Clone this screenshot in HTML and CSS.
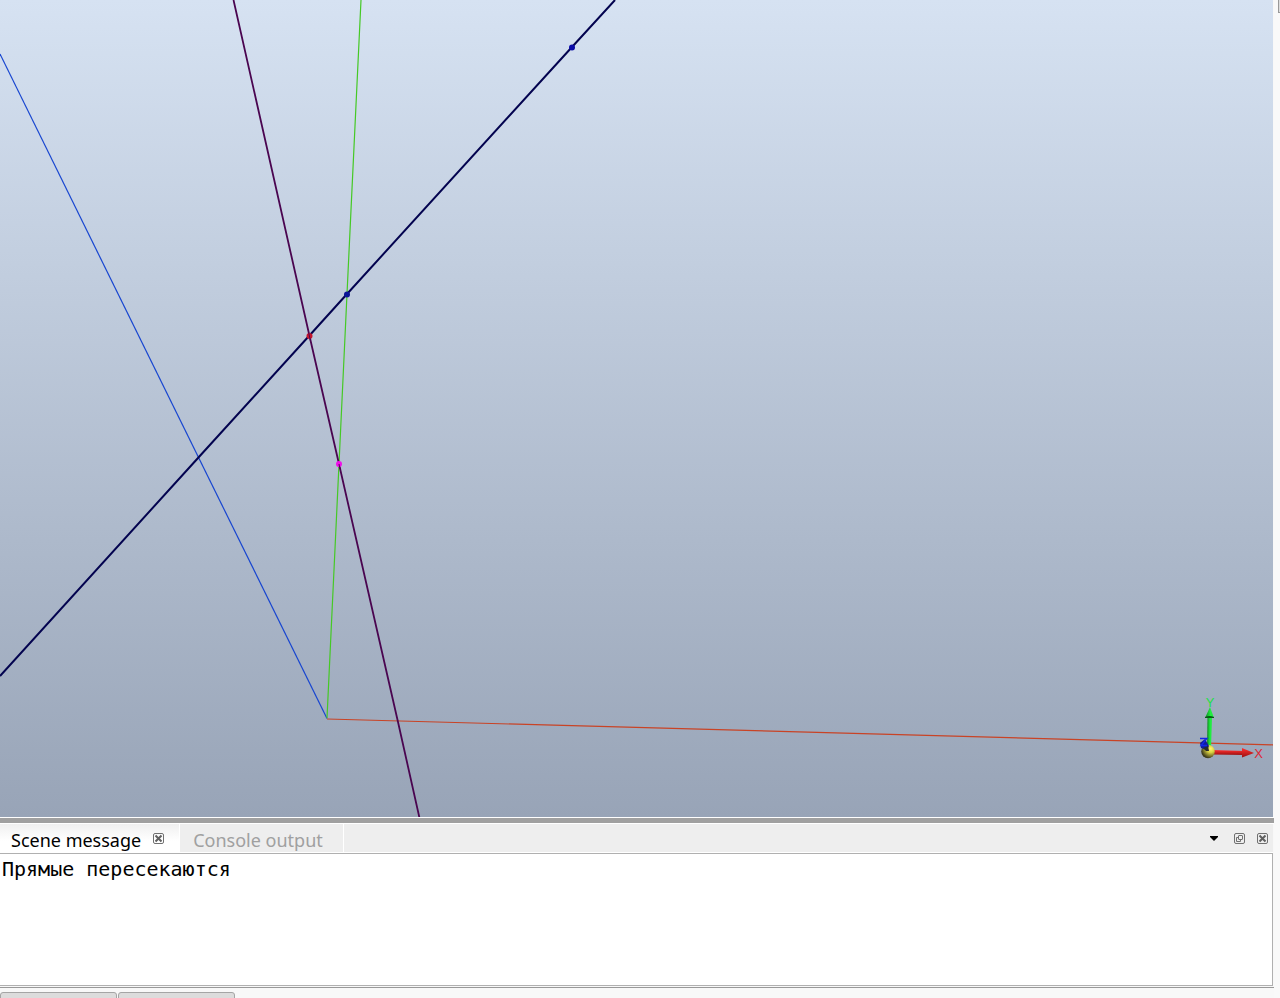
FILE: index.html
```
<!DOCTYPE html>
<html lang="ru">
<head>
<meta charset="utf-8">
<title>Scene message</title>
<link rel="stylesheet" href="styles.css">
</head>
<body>
<div class="window">
  <main class="workspace">
    <section class="viewport" aria-label="3D scene">
      <svg class="scene" aria-hidden="true" fill="none">
        <path d="M0 54L327 718.500" stroke="#1745d0" stroke-width="1.200"/>
        <path d="M361 0L347 294L339 464L327 718" stroke="#45c925" stroke-width="1.200"/>
        <path d="M327 719L1280 745" stroke="#c94325" stroke-width="1.200"/>
        <path d="M0 676L198 458L309 336L347 294L572 47L615 0" stroke="#03034f" stroke-width="2"/>
        <path d="M233.500 0L309.500 336L339 464L398 722L419.500 818" stroke="#4a0550" stroke-width="1.800"/>
        <circle cx="572" cy="47.500" r="3" fill="#0a0aa8"/>
        <circle cx="347" cy="294.500" r="3" fill="#0a1596"/>
        <circle cx="309.500" cy="336" r="3" fill="#c5142c"/>
        <path d="M308.500 332L310.500 341" stroke="#4a0550"/>
        <circle cx="339" cy="464" r="3" fill="#f010e8"/>
        <path d="M339 464L340 469" stroke="#4a0550"/>
      </svg>
      <svg class="triad" viewBox="1180 690 93 75" width="93" height="75" role="img" aria-label="X Y Z">
        <defs>
          <linearGradient id="red" x1="0" y1="0" x2="0" y2="1"><stop offset="0" stop-color="#ff3030"/><stop offset="1" stop-color="#9c1010"/></linearGradient>
          <linearGradient id="green"><stop offset="0" stop-color="#118020"/><stop offset=".6" stop-color="#20ed40"/></linearGradient>
          <radialGradient id="ball" cx=".7" cy=".3" r=".7"><stop offset="0" stop-color="#fff870"/><stop offset=".4" stop-color="#d8d040"/><stop offset="1" stop-color="#3d3b1c"/></radialGradient>
        </defs>
        <path d="M1207.500 716H1212L1211 749H1207Z" fill="url(#green)"/>
        <path d="M1210 707L1214 718H1205Z" fill="url(#green)"/>
        <path d="M1205 717Q1209.500 715 1214 717V718H1205Z" fill="#075b15"/>
        <path d="M1212 750L1244 751V755L1212 754.500Z" fill="url(#red)"/>
        <path d="M1242 748L1254 753L1242 757.500Z" fill="url(#red)"/>
        <circle cx="1208" cy="751.500" r="6.800" fill="url(#ball)"/>
        <path d="M1200 743L1205 739L1209 746L1207 750L1201 748Z" fill="#101d9c"/>
        <path d="M1203 748L1208 746L1209 751L1206 751Z" fill="#292b2d"/>
        <path d="M1200 738.500H1207L1201 745.500H1207" fill="none" stroke="#1425e6" stroke-width="1.300"/>
        <text class="axis" x="1210" y="707" fill="#22e044">Y</text>
        <text class="axis" x="1258.500" y="758" fill="#df2634">X</text>
      </svg>
    </section>
    <div class="splitter"></div>
    <section class="dock">
      <header class="dock-bar">
        <div class="tab tab-active">
          <button class="tab-name" type="button">Scene message</button>
          <button class="icon-button" type="button" aria-label="Close tab">
            <svg width="11" height="11" viewBox="0 0 11 11" fill="none"><rect x=".5" y=".5" width="10" height="10" rx="1.500" stroke="#707070"/><path d="M2.500 2.500L8.500 8.500M8.500 2.500L2.500 8.500" stroke="#606060" stroke-width="2"/></svg>
          </button>
        </div>
        <div class="tab"><button class="tab-name" type="button">Console output</button></div>
        <div class="dock-tools">
          <button class="icon-button" type="button" aria-label="Tab list">
            <svg width="8" height="5" viewBox="0 0 8 5"><path d="M0 0H8V1L4 5L0 1Z" fill="#000"/></svg>
          </button>
          <button class="icon-button" type="button" aria-label="Float panel">
            <svg width="11" height="11" viewBox="0 0 11 11" fill="none" stroke="#707070"><rect x=".5" y=".5" width="10" height="10" rx="1.500"/><rect x="4.500" y="2.500" width="4" height="4" rx=".5"/><path d="M4 4.500H2.500V8.500H6.500V7"/></svg>
          </button>
          <button class="icon-button" type="button" aria-label="Close panel">
            <svg width="11" height="11" viewBox="0 0 11 11" fill="none"><rect x=".5" y=".5" width="10" height="10" rx="1.500" stroke="#707070"/><path d="M2.500 2.500L8.500 8.500M8.500 2.500L2.500 8.500" stroke="#606060" stroke-width="2"/></svg>
          </button>
        </div>
      </header>
      <textarea class="message" aria-label="Scene message" spellcheck="false" readonly>Прямые пересекаются</textarea>
    </section>
    <footer class="bottom-tabs">
      <button class="bottom-tab" type="button" aria-label="First panel"></button>
      <button class="bottom-tab" type="button" aria-label="Second panel"></button>
    </footer>
  </main>
  <aside class="side"><div class="side-panel"></div></aside>
</div>
</body>
</html>
```
FILE: styles.css
```
* {
  box-sizing: border-box;
}

body {
  margin: 0;
  background: #f8f8f8;
  font-family: "Noto Sans", sans-serif;
}

button {
  margin: 0;
  padding: 0;
  border: 0;
  background: none;
  font: inherit;
  color: inherit;
}

.window {
  display: flex;
  height: 100vh;
  overflow: hidden;
}

.workspace {
  display: flex;
  flex: 1;
  flex-direction: column;
  min-width: 0;
}

.viewport {
  position: relative;
  flex: 1;
  min-height: 0;
  margin-right: 1px;
  overflow: hidden;
  background: linear-gradient(#d6e2f2, #98a4b7);
}

.scene {
  display: block;
  width: 100%;
  height: 100%;
}

.triad {
  position: absolute;
  right: 0;
  bottom: 52px;
}

.axis {
  font-family: "Liberation Sans", sans-serif;
  font-size: 13px;
  text-anchor: middle;
}

.splitter {
  height: 7px;
  border: solid #fff;
  border-width: 1px 0;
  background: #a0a0a0;
}

.dock {
  margin-right: 1px;
}

.dock-bar {
  display: flex;
  height: 29px;
  border-bottom: 1px solid #fff;
  background: #eee;
}

.tab {
  display: flex;
  align-items: center;
  gap: 12px;
  padding: 0 20px 0 13px;
  border-right: 1px solid #fff;
  color: #a0a0a0;
  font-size: 18px;
  line-height: 28px;
}

.tab-active {
  padding: 0 15px 0 11px;
  background: linear-gradient(#f0f0f0, #fff 60%);
  color: #000;
}

.tab-name {
  padding-top: 4px;
  white-space: nowrap;
}

.icon-button {
  display: flex;
}

.dock-tools {
  display: flex;
  align-items: center;
  gap: 12px;
  margin-left: auto;
  padding-right: 5px;
}

.dock-tools .icon-button:first-child {
  margin-right: 4px;
}

.message {
  display: block;
  width: 100%;
  height: 133px;
  padding: 3px 2px;
  border: 1px solid #b0b0b0;
  border-left: 0;
  outline: 0;
  resize: none;
  background: #fff;
  color: #000;
  font: 20px/24px "DejaVu Sans Mono", monospace;
}

.bottom-tabs {
  display: flex;
  gap: 1px;
  height: 11px;
  margin-top: 1px;
  padding-top: 4px;
  border-top: 1px solid #999;
  overflow: hidden;
}

.bottom-tab {
  width: 117px;
  height: 24px;
  border: 1px solid #a5a5a5;
  border-radius: 3px;
  background: #dcdcdc;
}

.side {
  width: 6px;
  background: #f9f9f9;
}

.side-panel {
  width: 2px;
  height: 13px;
  margin-left: auto;
  border-left: 1px solid #999;
  border-bottom: 1px solid #999;
  background: #ddd;
}
```
